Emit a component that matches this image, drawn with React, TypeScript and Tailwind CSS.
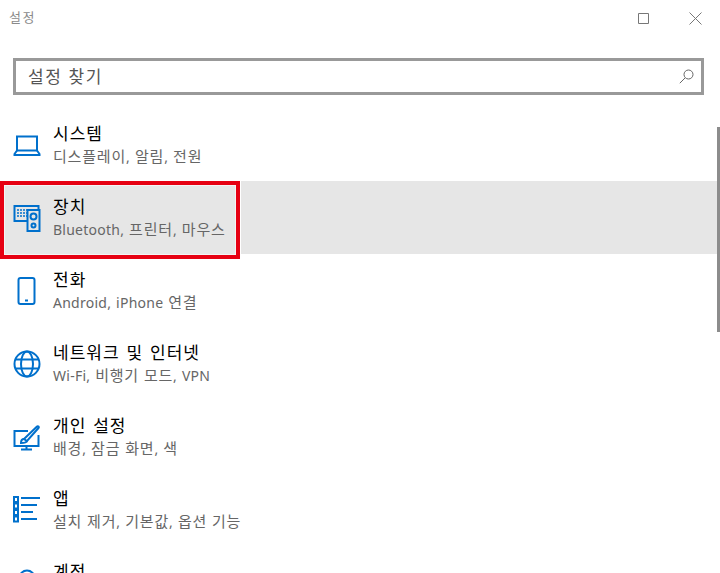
import React from "react";

const font = "font-['Noto_Sans','Noto_Sans_CJK_KR',sans-serif]";

const Laptop = () => (
  <svg width="28" height="24" viewBox="0 0 28 24" fill="none" stroke="#0070cc" strokeWidth="2">
    <path d="M4 3.5h20v14H4z" />
    <path d="M4 17.5 1.5 21v1h25v-1L24 17.5" />
  </svg>
);

const Devices = () => (
  <svg width="28" height="28" viewBox="0 0 28 28" fill="none" stroke="#0070cc">
    <path strokeWidth="2" d="M14 17H1.5V2h24v3" />
    <path strokeWidth="1.5" strokeDasharray="2 1" d="M4 6h17M4 9h10M4 12h10" />
    <rect x="14.5" y="6" width="12" height="21" fill="#e6e6e6" strokeWidth="2" />
    <circle cx="20.5" cy="12.5" r="3" strokeWidth="2" />
    <circle cx="20.5" cy="21.5" r="2" strokeWidth="2" />
  </svg>
);

const Phone = () => (
  <svg width="28" height="32" viewBox="0 0 28 32" fill="none" stroke="#0070cc" strokeWidth="2">
    <rect x="5.5" y="3" width="16" height="26" rx="2" />
    <path d="M12 25.5h3" />
  </svg>
);

const Globe = () => (
  <svg width="28" height="28" viewBox="0 0 28 28" fill="none" stroke="#0070cc" strokeWidth="2">
    <circle cx="14" cy="14" r="12.5" />
    <ellipse cx="14" cy="14" rx="6" ry="12.5" />
    <path d="M2 9.5h24M2 18.5h24" />
  </svg>
);

const Brush = () => (
  <svg width="28" height="28" viewBox="0 0 28 28" fill="none" stroke="#0070cc" strokeWidth="2">
    <path d="M15 8H1.5v15h24V12" />
    <path d="M13.5 23v3M8 26.5h11" />
    <path d="M11 16 24 3.5c1-1 2.5.5 1.5 1.5L14 18z" />
    <path d="M11 16c-2 0-3 1.5-3 4 2.5 0 5.5-.5 6-2" />
  </svg>
);

const Apps = () => (
  <svg width="28" height="28" viewBox="0 0 28 28" fill="none" stroke="#0070cc" strokeWidth="2">
    <path d="M8 2h19M8 9h16M8 16h12M8 23h16" />
    <rect x="1" y="1" width="4" height="5" strokeWidth="2" />
    <rect x="1" y="7.5" width="4" height="5" strokeWidth="2" />
    <rect x="1" y="14" width="4" height="5" strokeWidth="2" />
    <rect x="1" y="20.5" width="4" height="5" strokeWidth="2" />
  </svg>
);

const Account = () => (
  <svg width="28" height="28" viewBox="0 0 28 28" fill="none" stroke="#0070cc" strokeWidth="2">
    <circle cx="14" cy="9" r="7.5" />
    <path d="M1.5 27c0-7 5.5-11 12.5-11s12.5 4 12.5 11" />
  </svg>
);

// hangul runs are wider than latin ones in the original font
const Mixed = ({ text }: { text: string }) => (
  <>
    {text.split(/([가-힣]+)/).map((part, i) =>
      /[가-힣]/.test(part) ? (
        <span key={i} className="text-[15px] tracking-[0.8px]">
          {part}
        </span>
      ) : (
        <span key={i} className="tracking-[0.25px]">
          {part}
        </span>
      ),
    )}
  </>
);

const items = [
  { icon: Laptop, title: "시스템", sub: "디스플레이, 알림, 전원" },
  { icon: Devices, title: "장치", sub: "Bluetooth, 프린터, 마우스", selected: true },
  { icon: Phone, title: "전화", sub: "Android, iPhone 연결" },
  { icon: Globe, title: "네트워크 및 인터넷", sub: "Wi-Fi, 비행기 모드, VPN" },
  { icon: Brush, title: "개인 설정", sub: "배경, 잠금 화면, 색" },
  { icon: Apps, title: "앱", sub: "설치 제거, 기본값, 옵션 기능" },
  { icon: Account, title: "계정", sub: "계정, 전자 메일, 동기화, 회사, 가족" },
];

export default function App() {
  return (
    <div className={`relative h-[573px] w-[720px] overflow-hidden bg-white ${font}`}>
      {/* title bar */}
      <div className="flex h-[36px] items-center pl-[9px]">
        <span className="flex-1 text-[13px] tracking-[1.5px] text-[#8a8a8a]">설정</span>
        <svg width="12" height="12" viewBox="0 0 12 12" fill="none" stroke="#777" className="mr-[40px]">
          <path d="M1.5 1.5h10v10h-10z" />
        </svg>
        <svg width="13" height="13" viewBox="0 0 13 13" fill="none" stroke="#777" className="mr-[18px]">
          <path d="M.5.5l12 12M12.5.5l-12 12" />
        </svg>
      </div>

      {/* search */}
      <div className="px-[13px] pt-[22px]">
        <div className="flex h-[37px] w-[691px] items-center justify-between border-[3px] border-[#999] pl-[12px] pr-[7px]">
          <span className="text-[17px] tracking-[1.6px] text-[#555]">설정 찾기</span>
          <svg width="15" height="15" viewBox="0 0 15 15" fill="none" stroke="#666">
            <circle cx="9.5" cy="5.5" r="4.5" />
            <path d="M6 9 .8 14.2" />
          </svg>
        </div>
      </div>

      {/* category list */}
      <div className="mt-[13px] flex flex-col">
        {items.map((item) => (
          <div
            key={item.title}
            className={`flex h-[73px] items-center pl-[13px] ${item.selected ? "bg-[#e6e6e6]" : ""}`}
          >
            <div className="flex w-[40px] shrink-0 items-center">
              <item.icon />
            </div>
            <div className="flex flex-col">
              <span className="text-[17px] leading-[23px] tracking-[1px] text-black [word-spacing:1.5px]">
                {item.title}
              </span>
              <span className="text-[14px] leading-[22px] text-[#666] [word-spacing:1px]">
                <Mixed text={item.sub} />
              </span>
            </div>
          </div>
        ))}
      </div>

      {/* scroll thumb */}
      <div className="absolute right-0 top-[127px] h-[205px] w-[3px] bg-[#8c8c8c]" />
      {/* red highlight drawn over the selected row */}
      <div className="absolute left-0 top-[181px] h-[78px] w-[240px] border-[4px] border-[#e60012] shadow-[inset_0_0_0_1px_#f4f4f4]" />
      <div className="absolute left-[240px] top-[181px] h-[73px] w-[1px] bg-white" />
    </div>
  );
}
